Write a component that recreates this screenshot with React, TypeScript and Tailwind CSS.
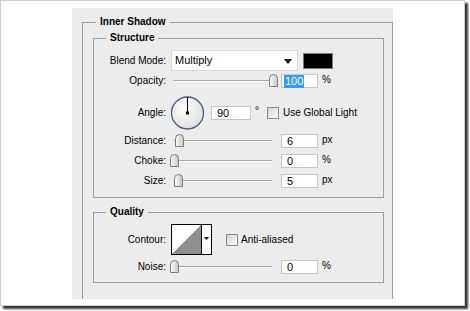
const font = { fontFamily: '"Liberation Sans", Arial, sans-serif' };

function Thumb() {
  return (
    <svg width="9" height="13" viewBox="0 0 9 13">
      <defs>
        <linearGradient id="thumbg" x1="0" x2="1" y1="0" y2="0">
          <stop offset="0" stopColor="#ffffff" />
          <stop offset="1" stopColor="#c4c4c4" />
        </linearGradient>
      </defs>
      <path d="M0.5 12.5V4.5Q0.5 0.5 4.5 0.5Q8.5 0.5 8.5 4.5V12.5Z" fill="url(#thumbg)" stroke="#7c7c7c" />
    </svg>
  );
}

function Slider({ value }: { value: number }) {
  return (
    <div className="relative ml-[8px] h-[14px] w-[99px] shrink-0">
      <div className="absolute left-0 top-[6px] h-[2px] w-[98px] border-t border-[#a4a4a4] bg-white" />
      <div className="absolute top-0" style={{ left: value * 0.99 - 4.5 }}>
        <Thumb />
      </div>
    </div>
  );
}

function Field({ value, w = 'w-[37px]', selected = false }: { value: string; w?: string; selected?: boolean }) {
  return (
    <div className={`flex h-[14px] ${w} shrink-0 items-center border border-[#c6c6c6] bg-white pl-[2px] text-[11px] leading-none text-black`}>
      {selected ? (
        <span className="bg-[#3399ff] px-[1px] py-[1px] text-white">{value}</span>
      ) : (
        <span className="pl-[3px]">{value}</span>
      )}
    </div>
  );
}

function Label({ children }: { children: string }) {
  return <div className="w-[72px] shrink-0 text-right text-[10px] leading-none text-black">{children}</div>;
}

function Check() {
  return <div className="h-[12px] w-[12px] shrink-0 border border-[#8a8a8a] bg-gradient-to-br from-[#d2d2d2] to-white" />;
}

function SliderRow({ label, value, unit }: { label: string; value: number; unit: string }) {
  return (
    <div className="flex h-[20px] items-center">
      <Label>{label}</Label>
      <Slider value={value} />
      <div className="ml-[8px]">
        <Field value={String(value)} />
      </div>
      <span className="ml-[4px] -mt-[3px] text-[10px] leading-none">{unit}</span>
    </div>
  );
}

function Group({ title, className, left, children }: { title: string; className: string; left: string; children: React.ReactNode }) {
  return (
    <div className={`relative border border-[#9e9e9e] ${className}`}>
      <span className={`absolute -top-[7px] ${left} bg-[#ececec] px-[4px] text-[10px] font-bold leading-[12px] text-black`}>
        {title}
      </span>
      {children}
    </div>
  );
}

export default function App() {
  return (
    <div className="h-[311px] w-[470px] bg-white" style={font}>
      <div className="h-[306px] w-[465px] border border-[#cfcfcf] bg-white pl-[71px] pt-[7px] shadow-[3px_3px_2px_rgba(0,0,0,0.8)]">
        <div className="h-[291px] w-[321px] overflow-hidden bg-[#ececec] pl-[10px] pt-[14px]">
          <Group title="Inner Shadow" left="left-[13px]" className="h-[300px] w-[311px] pl-[10px] pt-[15px]">
            <Group title="Structure" left="left-[12px]" className="h-[160px] w-[291px] pt-[11px]">
              {/* Blend mode */}
              <div className="flex h-[21px] items-center">
                <Label>Blend Mode:</Label>
                <div className="relative ml-[5px] flex h-[21px] w-[127px] items-center border border-[#d8d8d8] bg-white pl-[3px] text-[11px]">
                  Multiply
                  <svg className="absolute right-[5px] top-[8px]" width="8" height="5" viewBox="0 0 8 5">
                    <path d="M0 0H8L4 5Z" fill="#000" />
                  </svg>
                </div>
                <div className="ml-[5px] h-[16px] w-[30px] border border-[#7a7a7a] bg-black" />
              </div>
              {/* Opacity */}
              <div className="mt-[1px] flex h-[18px] items-center">
                <Label>Opacity:</Label>
                <Slider value={100} />
                <div className="ml-[8px]">
                  <Field value="100" selected />
                </div>
                <span className="ml-[4px] -mt-[3px] text-[10px] leading-none">%</span>
              </div>
              {/* Angle */}
              <div className="mt-[6px] flex h-[34px] items-center">
                <Label>Angle:</Label>
                <svg className="ml-[4px] shrink-0" width="35" height="34" viewBox="0 0 35 34">
                  <defs>
                    <radialGradient id="dialg" cx="0.4" cy="0.35" r="0.7">
                      <stop offset="0" stopColor="#ffffff" />
                      <stop offset="1" stopColor="#dcdcdc" />
                    </radialGradient>
                  </defs>
                  <circle cx="17.5" cy="17" r="16" fill="url(#dialg)" stroke="#4b5b7c" strokeWidth="1.3" />
                  <line x1="17.5" y1="17" x2="17.5" y2="1" stroke="#000" strokeWidth="1" />
                  <rect x="16" y="15.5" width="3" height="3" fill="#000" />
                </svg>
                <div className="ml-[6px]">
                  <Field value="90" w="w-[40px]" />
                </div>
                <span className="ml-[4px] -mt-[5px] text-[10px] leading-none">°</span>
                <div className="ml-[8px]">
                  <Check />
                </div>
                <span className="ml-[4px] text-[10px] leading-none">Use Global Light</span>
              </div>
              <div className="mt-[1px]">
                <SliderRow label="Distance:" value={6} unit="px" />
                <SliderRow label="Choke:" value={0} unit="%" />
                <SliderRow label="Size:" value={5} unit="px" />
              </div>
            </Group>
            <Group title="Quality" left="left-[12px]" className="mt-[14px] h-[71px] w-[291px] pt-[11px]">
              <div className="flex h-[31px] items-center">
                <Label>Contour:</Label>
                <svg className="ml-[5px] shrink-0" width="41" height="31" viewBox="0 0 41 31">
                  <rect x="0.5" y="0.5" width="40" height="30" fill="#fff" stroke="#000" />
                  <path d="M1 30L30 1V30Z" fill="#8f8f8f" />
                  <line x1="30.5" y1="0" x2="30.5" y2="31" stroke="#000" />
                  <path d="M33 13H38L35.5 16Z" fill="#000" />
                </svg>
                <div className="ml-[14px]">
                  <Check />
                </div>
                <span className="ml-[3px] text-[10px] leading-none">Anti-aliased</span>
              </div>
              <div className="mt-[2px]">
                <SliderRow label="Noise:" value={0} unit="%" />
              </div>
            </Group>
          </Group>
        </div>
      </div>
    </div>
  );
}
